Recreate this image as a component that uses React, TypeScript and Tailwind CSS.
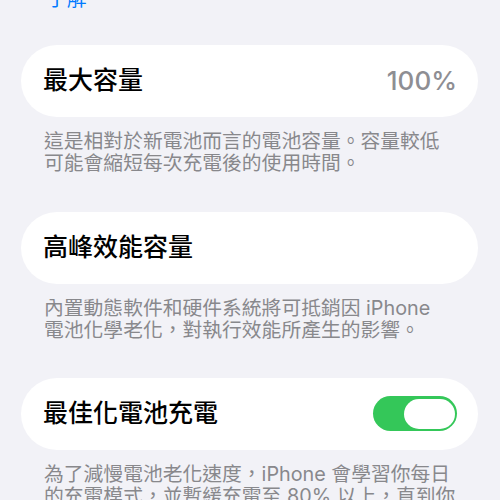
import React from "react";

const font = { fontFamily: '"Inter", "Noto Sans CJK TC", sans-serif' };

function Card({ title, children }: { title: string; children?: React.ReactNode }) {
    return (
        <div className="flex h-[72px] items-center justify-between rounded-full bg-white pl-[22px] pr-[21px]">
            <p className="text-[25px] font-medium leading-none text-black">{title}</p>
            {children}
        </div>
    )
}

function Footer({ lines }: { lines: string[] }) {
    return (
        <div className="mt-[13px] pl-[23px] text-[19.8px] leading-[22.5px] text-[#88888c]">
            {lines.map((line) => (
                <p key={line} className="whitespace-nowrap">{line}</p>
            ))}
        </div>
    )
}

function Toggle() {
    return (
        <div className="flex h-[35px] w-[84px] items-center justify-end rounded-full bg-[#34c759] p-[2.5px]">
            <div className="h-[30px] w-[51px] rounded-full bg-white"></div>
        </div>
    )
}

export default function App() {
    return (
        <div className="h-[500px] w-[500px] overflow-hidden bg-[#f2f2f7] pl-[21px] pr-[22px]" style={font}>
            <p className="-mt-[12px] pl-[26px] text-[19.8px] leading-[22.5px] text-[#007aff]">了解</p>
            <div className="mt-[34px]">
                <Card title="最大容量">
                    <p className="text-[26px] font-medium leading-none text-[#8e8e93]">100%</p>
                </Card>
                <Footer lines={["這是相對於新電池而言的電池容量。容量較低", "可能會縮短每次充電後的使用時間。"]} />
            </div>
            <div className="mt-[37px]">
                <Card title="高峰效能容量" />
                <Footer lines={["內置動態軟件和硬件系統將可抵銷因 iPhone", "電池化學老化，對執行效能所產生的影響。"]} />
            </div>
            <div className="mt-[36px]">
                <Card title="最佳化電池充電">
                    <Toggle />
                </Card>
                <Footer lines={["為了減慢電池老化速度，iPhone 會學習你每日", "的充電模式，並暫緩充電至 80% 以上，直到你"]} />
            </div>
        </div>
    )
}
